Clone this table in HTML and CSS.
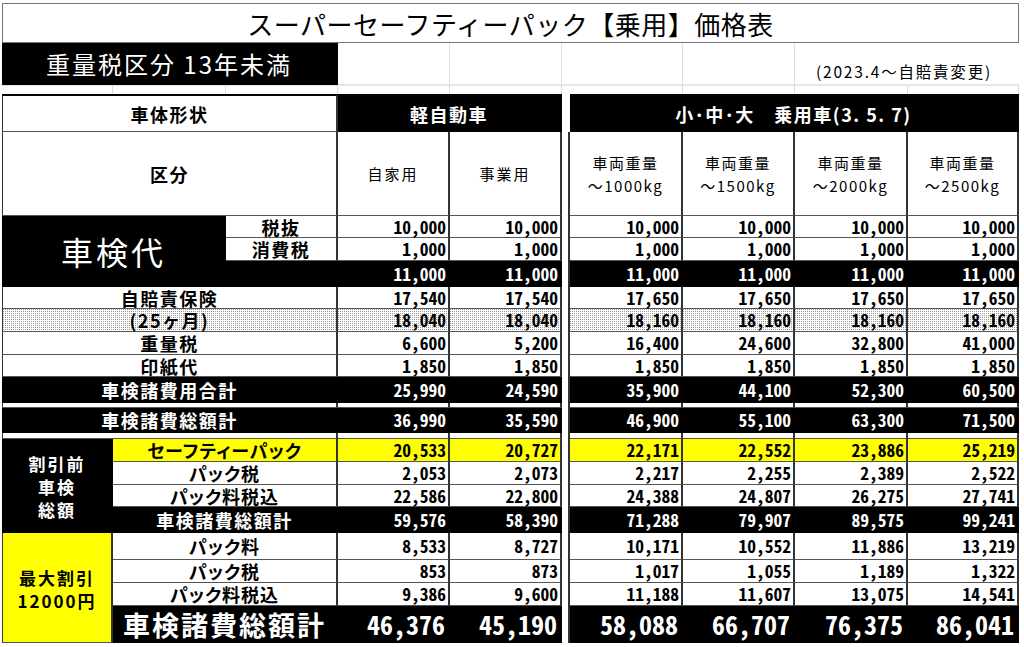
FILE: index.html
```html
<!DOCTYPE html>
<html lang="ja">
<head>
<meta charset="utf-8">
<title>スーパーセーフティーパック【乗用】価格表</title>
<link rel="stylesheet" href="styles.css">
</head>
<body>
<div class="sheet">
  <!-- title -->
  <div class="c title full">スーパーセーフティーパック【乗用】価格表</div>

  <!-- row 2 -->
  <div class="c blk s3 sub">重量税区分 13年未満</div>
  <div class="c lg"></div>
  <div class="c lg"></div>
  <div class="c lgg"></div>
  <div class="c lg"></div>
  <div class="c lg"></div>
  <div class="c lg s2 note">(2023.4～自賠責変更)</div>

  <!-- row 3 spacer -->
  <div class="c lg lt"></div>
  <div class="c lg lt"></div>
  <div class="c lg lt"></div>
  <div class="c lg lt"></div>
  <div class="c lg lt"></div>
  <div class="c lgg lt"></div>
  <div class="c lg lt"></div>
  <div class="c lg lt"></div>
  <div class="c lg lt"></div>
  <div class="c lg lt"></div>

  <!-- header 1 -->
  <div class="c s3 L lbl top">車体形状</div>
  <div class="c blk s2 lbl top">軽自動車</div>
  <div class="c g0"></div>
  <div class="c blk s4 lbl top">小･中･大　乗用車(3. 5. 7)</div>

  <!-- header 2 -->
  <div class="c s3 L lbl">区分</div>
  <div class="c hd">自家用</div>
  <div class="c hd">事業用</div>
  <div class="c g"></div>
  <div class="c hd two"><span>車両重量</span><span>～1000kg</span></div>
  <div class="c hd two"><span>車両重量</span><span>～1500kg</span></div>
  <div class="c hd two"><span>車両重量</span><span>～2000kg</span></div>
  <div class="c hd two"><span>車両重量</span><span>～2500kg</span></div>

  <!-- 税抜 -->
  <div class="c blk s2 r3 L big">車検代</div>
  <div class="c lbl">税抜</div>
  <div class="c n">10,000</div><div class="c n">10,000</div>
  <div class="c g"></div>
  <div class="c n">10,000</div><div class="c n">10,000</div><div class="c n">10,000</div><div class="c n">10,000</div>

  <!-- 消費税 -->
  <div class="c lbl">消費税</div>
  <div class="c n">1,000</div><div class="c n">1,000</div>
  <div class="c g"></div>
  <div class="c n">1,000</div><div class="c n">1,000</div><div class="c n">1,000</div><div class="c n">1,000</div>

  <!-- 税込 -->
  <div class="c blk"></div>
  <div class="c n blk">11,000</div><div class="c n blk">11,000</div>
  <div class="c g"></div>
  <div class="c n blk">11,000</div><div class="c n blk">11,000</div><div class="c n blk">11,000</div><div class="c n blk">11,000</div>

  <!-- 自賠責保険 -->
  <div class="c s3 L lbl">自賠責保険</div>
  <div class="c n">17,540</div><div class="c n">17,540</div>
  <div class="c g"></div>
  <div class="c n">17,650</div><div class="c n">17,650</div><div class="c n">17,650</div><div class="c n">17,650</div>

  <!-- 25ヶ月 -->
  <div class="c s3 L lbl dot">(25ヶ月)</div>
  <div class="c n dot">18,040</div><div class="c n dot">18,040</div>
  <div class="c g"></div>
  <div class="c n dot">18,160</div><div class="c n dot">18,160</div><div class="c n dot">18,160</div><div class="c n dot">18,160</div>

  <!-- 重量税 -->
  <div class="c s3 L lbl">重量税</div>
  <div class="c n">6,600</div><div class="c n">5,200</div>
  <div class="c g"></div>
  <div class="c n">16,400</div><div class="c n">24,600</div><div class="c n">32,800</div><div class="c n">41,000</div>

  <!-- 印紙代 -->
  <div class="c s3 L lbl">印紙代</div>
  <div class="c n">1,850</div><div class="c n">1,850</div>
  <div class="c g"></div>
  <div class="c n">1,850</div><div class="c n">1,850</div><div class="c n">1,850</div><div class="c n">1,850</div>

  <!-- 車検諸費用合計 -->
  <div class="c s3 L lbl blk">車検諸費用合計</div>
  <div class="c n blk">25,990</div><div class="c n blk">24,590</div>
  <div class="c g"></div>
  <div class="c n blk">35,900</div><div class="c n blk">44,100</div><div class="c n blk">52,300</div><div class="c n blk">60,500</div>

  <!-- spacer -->
  <div class="c s3 L sp"></div>
  <div class="c"></div><div class="c"></div>
  <div class="c g"></div>
  <div class="c"></div><div class="c"></div><div class="c"></div><div class="c"></div>

  <!-- 車検諸費総額計 -->
  <div class="c s3 L lbl blk">車検諸費総額計</div>
  <div class="c n blk">36,990</div><div class="c n blk">35,590</div>
  <div class="c g"></div>
  <div class="c n blk">46,900</div><div class="c n blk">55,100</div><div class="c n blk">63,300</div><div class="c n blk">71,500</div>

  <!-- spacer -->
  <div class="c s3 L sp"></div>
  <div class="c"></div><div class="c"></div>
  <div class="c g"></div>
  <div class="c"></div><div class="c"></div><div class="c"></div><div class="c"></div>

  <!-- セーフティーパック -->
  <div class="c blk r4 L side"><span>割引前</span><span>車検</span><span>総額</span></div>
  <div class="c s2 lbl yel kana">セーフティーパック</div>
  <div class="c n yel">20,533</div><div class="c n yel">20,727</div>
  <div class="c g"></div>
  <div class="c n yel">22,171</div><div class="c n yel">22,552</div><div class="c n yel">23,886</div><div class="c n yel">25,219</div>

  <!-- パック税 -->
  <div class="c s2 lbl kana">パック税</div>
  <div class="c n">2,053</div><div class="c n">2,073</div>
  <div class="c g"></div>
  <div class="c n">2,217</div><div class="c n">2,255</div><div class="c n">2,389</div><div class="c n">2,522</div>

  <!-- パック料税込 -->
  <div class="c s2 lbl kana">パック料税込</div>
  <div class="c n">22,586</div><div class="c n">22,800</div>
  <div class="c g"></div>
  <div class="c n">24,388</div><div class="c n">24,807</div><div class="c n">26,275</div><div class="c n">27,741</div>

  <!-- 車検諸費総額計 -->
  <div class="c s2 lbl blk">車検諸費総額計</div>
  <div class="c n blk">59,576</div><div class="c n blk">58,390</div>
  <div class="c g"></div>
  <div class="c n blk">71,288</div><div class="c n blk">79,907</div><div class="c n blk">89,575</div><div class="c n blk">99,241</div>

  <!-- パック料 -->
  <div class="c yel r4 L side"><span>最大割引</span><span>12000円</span></div>
  <div class="c s2 lbl kana">パック料</div>
  <div class="c n">8,533</div><div class="c n">8,727</div>
  <div class="c g"></div>
  <div class="c n">10,171</div><div class="c n">10,552</div><div class="c n">11,886</div><div class="c n">13,219</div>

  <!-- パック税 -->
  <div class="c s2 lbl kana">パック税</div>
  <div class="c n">853</div><div class="c n">873</div>
  <div class="c g"></div>
  <div class="c n">1,017</div><div class="c n">1,055</div><div class="c n">1,189</div><div class="c n">1,322</div>

  <!-- パック料税込 -->
  <div class="c s2 lbl kana">パック料税込</div>
  <div class="c n">9,386</div><div class="c n">9,600</div>
  <div class="c g"></div>
  <div class="c n">11,188</div><div class="c n">11,607</div><div class="c n">13,075</div><div class="c n">14,541</div>

  <!-- final -->
  <div class="c s2 blk total">車検諸費総額計</div>
  <div class="c n blk bign">46,376</div><div class="c n blk bign">45,190</div>
  <div class="c g"></div>
  <div class="c n blk bign">58,088</div><div class="c n blk bign">66,707</div><div class="c n blk bign">76,375</div><div class="c n blk bign">86,041</div>
</div>
</body>
</html>
```

FILE: styles.css
```css
* { box-sizing: border-box; }
html, body { margin: 0; padding: 0; background: #fff; }
body {
  font-family: "Noto Sans CJK JP", "Noto Sans", sans-serif;
  color: #000;
}

.sheet {
  display: grid;
  grid-template-columns: 111px 113px 112px 112px 112px 8px 113px 112px 113px 111px;
  grid-template-rows: 40px 42px 9px 38px 84px 22px 23px 26px 22px 23px 23px 22px 26px 5px 25px 6px 23px 23px 22px 26px 27px 23px 23px 37px;
  width: 1017px;
  margin: 3px 0 0 2px;
}

.c {
  display: flex;
  align-items: center;
  justify-content: center;
  border-right: 2px solid #333;
  border-bottom: 1px solid #555;
  white-space: nowrap;
  line-height: 1;
  background: #fff;
  min-width: 0;
  min-height: 0;
}

.full { grid-column: 1 / -1; }
.s2 { grid-column: span 2; }
.s3 { grid-column: span 3; }
.s4 { grid-column: span 4; }
.r3 { grid-row: span 3; }
.r4 { grid-row: span 4; }
.L { border-left: 1px solid #333; }

.title {
  border: 1px solid #777;
  font-size: 26px;
  letter-spacing: 0.5px;
  padding-top: 1px;
}

.blk { background: #000; color: #fff; border-color: #000; }
.yel { background: #ffff00; }

.sub {
  font-size: 24px;
  letter-spacing: 2px;
  border-color: #000;
}

.lg { border-right: 1px solid #dedede; border-bottom: 1px solid #e6e6e6; }
.lgg { border-right: none; border-bottom: 1px solid #e6e6e6; }
.lt { border-top: 1px solid #e6e6e6; border-bottom: none; }
.note {
  justify-content: flex-end;
  align-items: flex-end;
  padding: 0 27px 5px 0;
  font-size: 15.5px;
  letter-spacing: 1.8px;
  border-right: none;
}

.top { border-top: 2px solid #000; }

.lbl {
  font-weight: 700;
  font-size: 18px;
  letter-spacing: 1.5px;
}
.kana { font-feature-settings: "palt" 1; letter-spacing: 1px; }

.hd {
  font-size: 15px;
  letter-spacing: 2px;
}
.two {
  flex-direction: column;
  line-height: 23px;
  letter-spacing: 1.5px;
}

.big {
  font-size: 32px;
  letter-spacing: 3px;
}
.side {
  flex-direction: column;
  gap: 6px;
  font-weight: 700;
  font-size: 17px;
  line-height: 1;
  letter-spacing: 2px;
  padding-top: 2px;
}
.total {
  font-size: 27px;
  letter-spacing: 2px;
  font-weight: 700;
}

.g { border-bottom: none; }
.g0 { border-right: none; border-bottom: none; }
.sp { border-bottom: 1px solid #555; }

.n {
  justify-content: flex-end;
  padding-right: 2px;
  font-weight: 700;
  font-size: 17.5px;
  font-feature-settings: "hwid" 1;
}
.bign {
  font-size: 26px;
  font-weight: 700;
  padding-right: 3px;
}

.dot {
  background-color: #9a9a9a;
  background-image:
    linear-gradient(90deg, transparent 1px, #fff 1px),
    linear-gradient(transparent 1px, #fff 1px);
  background-size: 2px 2px, 2px 2px;
}
```
